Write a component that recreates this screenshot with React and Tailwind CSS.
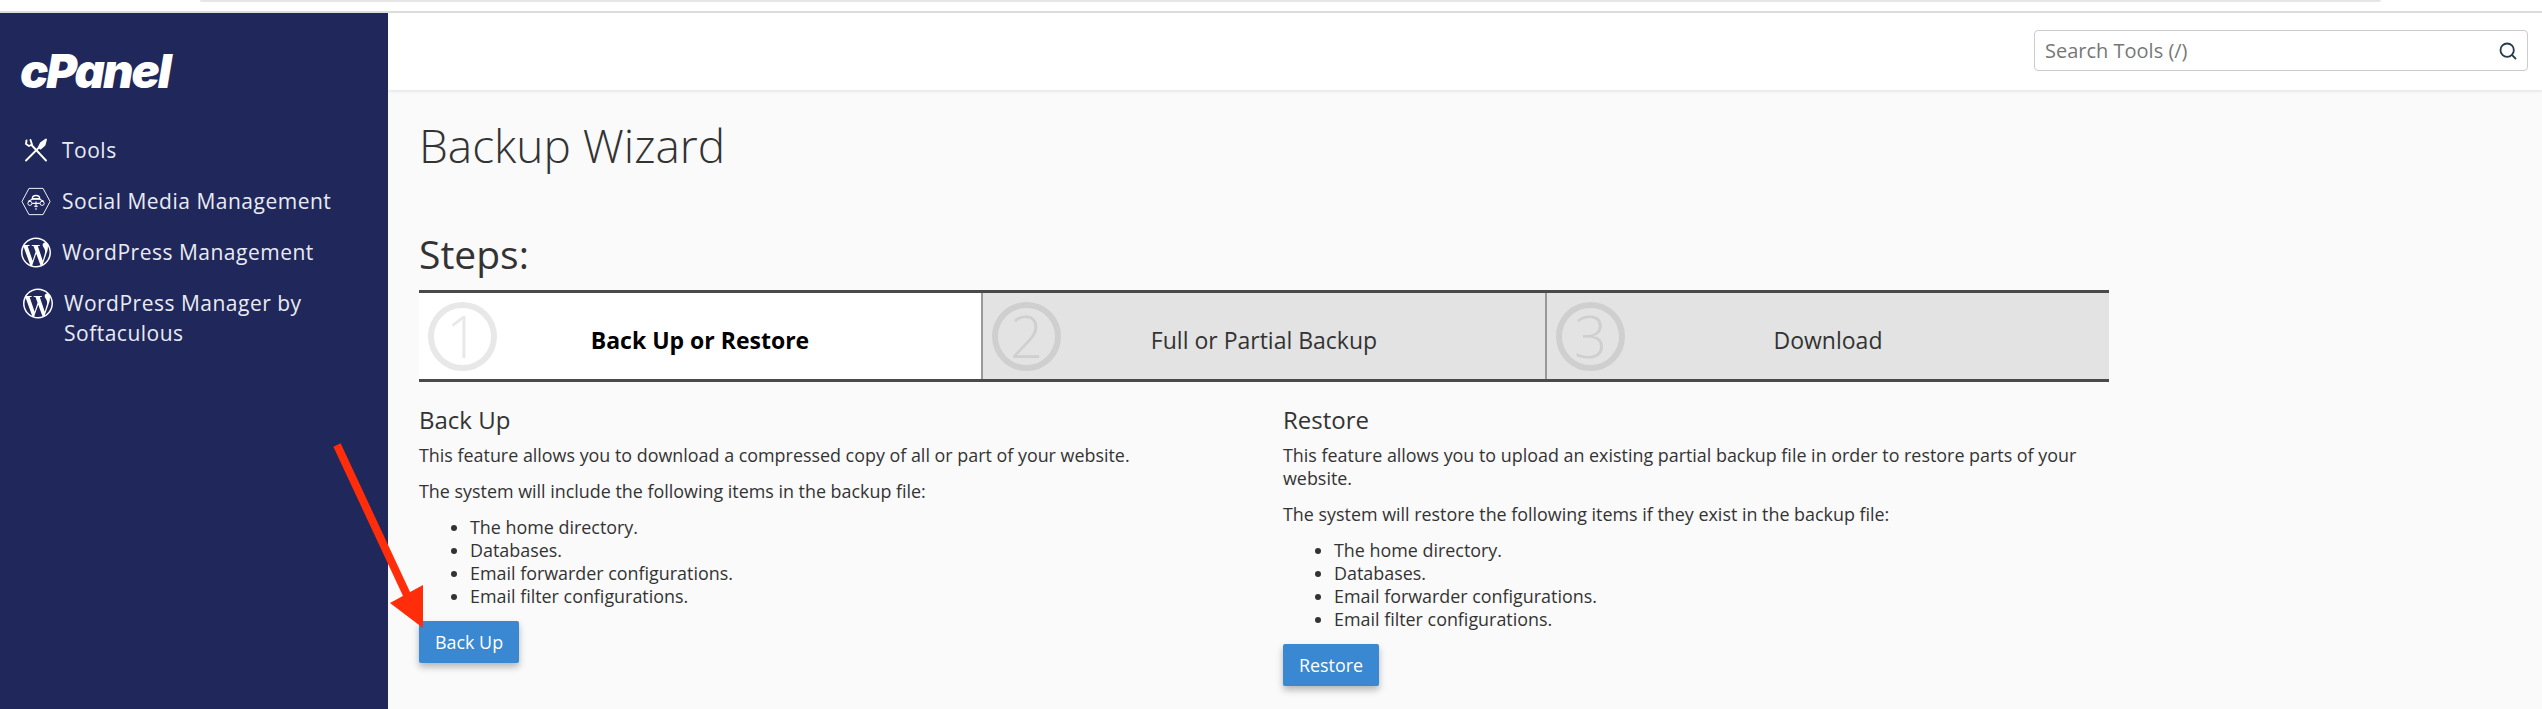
import React from 'react';
import { Search } from 'lucide-react';
import { SiWordpress } from 'react-icons/si';

const font = { fontFamily: '"Open Sans", "Noto Sans", sans-serif' };

function ToolsIcon() {
  return (
    <svg viewBox="0 0 24 24" className="w-[24px] h-[24px] text-white" fill="none" stroke="currentColor" strokeWidth="1.9" strokeLinecap="round" strokeLinejoin="round">
      <path d="M2.5 2.5 L2 6 L5 8 L8 6.5 L6.5 2" />
      <path d="M7.5 7 L22 22.5" />
      <path d="M14.5 10 L2 22.5" />
      <path d="M15 9 L17 5 L22 1.5 L20.5 7 L16.5 10.5 Z" fill="currentColor" />
    </svg>
  );
}

function HexIcon() {
  return (
    <svg viewBox="0 0 32 32" className="w-[31px] h-[31px] text-white" fill="none" stroke="currentColor" strokeWidth="1" strokeLinejoin="round">
      <path d="M1 16 L8.5 2 L23.5 2 L31 16 L23.5 30 L8.5 30 Z" />
      <path d="M12 13 C12 8.5 20 8.5 20 13 Z" strokeWidth="1.4" />
      <path d="M7.5 16 L12 13.5 L20 13.5 L24.5 16" strokeWidth="1.2" />
      <circle cx="9.5" cy="18" r="2.2" />
      <circle cx="22.5" cy="18" r="2.2" />
      <path d="M12 18 L20 18 M16 16 L16 22 M14 21 L18 21 M15 24 L17 24" strokeWidth="1.2" />
    </svg>
  );
}

function NavItem({ icon, children, indent }) {
  return (
    <li className={`flex items-start gap-[11px] ${indent ? 'pl-[23px]' : 'pl-[21px]'}`}>
      <span className="w-[30px] h-[30px] flex items-center justify-center shrink-0">{icon}</span>
      <span className="text-[21px] leading-[30px] tracking-[0.5px] text-[#e9ebf3]">{children}</span>
    </li>
  );
}

function Step({ num, label, active, first }) {
  return (
    <div className={`flex-1 flex items-center h-full ${active ? 'bg-white' : 'bg-[#e3e3e3]'} ${first ? '' : 'border-l-2 border-[#999999]'}`}>
      <div className={`ml-[9px] w-[69px] h-[69px] shrink-0 rounded-full border-[6px] flex items-center justify-center text-[58px] font-light leading-none ${active ? 'border-[#e8e8e8] text-[#e8e8e8]' : 'border-[#cfcfcf] text-[#cfcfcf]'}`}>
        {num}
      </div>
      <div className={`flex-1 pr-[78px] pt-[9px] text-center text-[23px] ${active ? 'font-bold text-black' : 'text-[#333333]'}`}>
        {label}
      </div>
    </div>
  );
}

function Column({ title, intro, includes, button }) {
  return (
    <div>
      <h3 className="text-[24px] leading-[32px] text-[#333333]">{title}</h3>
      <p className="mt-[8px] text-[17.9px] leading-[23px] text-[#333333]">{intro}</p>
      <p className="mt-[13px] text-[17.9px] leading-[23px] text-[#333333]">{includes}</p>
      <ul className="mt-[13px] ml-[51px] list-disc text-[17.9px] leading-[23px] text-[#333333]">
        <li>The home directory.</li>
        <li>Databases.</li>
        <li>Email forwarder configurations.</li>
        <li>Email filter configurations.</li>
      </ul>
      <button className="mt-[13px] h-[42px] px-[16px] rounded-[2px] bg-[#3a87d2] text-[17.9px] text-white shadow-[0_4px_7px_rgba(0,0,0,0.28)]">
        {button}
      </button>
    </div>
  );
}

export default function App() {
  return (
    <div className="relative h-screen flex flex-col overflow-hidden bg-white" style={font}>
      {/* browser leftovers at the very top */}
      <div className="h-[13px] shrink-0 bg-white border-b-2 border-[#dcdcdc]">
        <div className="ml-[200px] w-[2181px] h-[2px] bg-[#e6e6e6] rounded-b-lg" />
      </div>

      <div className="flex flex-1 min-h-0">
        <aside className="w-[388px] shrink-0 bg-[#20275a]">
          <div className="pl-[20px] pt-[33px] text-[47px] leading-[50px] font-black italic tracking-[-2px] text-white" style={{ fontFamily: 'Inter, sans-serif' }}>
            cPanel
          </div>
          <ul className="mt-[39px] flex flex-col gap-[21px]">
            <NavItem icon={<ToolsIcon />}>Tools</NavItem>
            <NavItem icon={<HexIcon />}>Social Media Management</NavItem>
            <NavItem icon={<SiWordpress className="w-[31px] h-[31px] text-white" />}>WordPress Management</NavItem>
            <NavItem indent icon={<SiWordpress className="w-[31px] h-[31px] text-white" />}>
              WordPress Manager by
              <br />
              Softaculous
            </NavItem>
          </ul>
        </aside>

        <div className="flex-1 min-w-0 flex flex-col bg-[#fafafa]">
          <header className="h-[77px] shrink-0 bg-white shadow-[0_2px_2px_rgba(0,0,0,0.07)] flex justify-end items-start pt-[17px] pr-[14px]">
            <div className="w-[494px] h-[41px] flex items-center justify-between pl-[10px] pr-[9px] bg-white border border-[#cccccc] rounded-[4px]">
              <span className="text-[20px] text-[#777777]">Search Tools (/)</span>
              <Search className="w-[20px] h-[20px] text-[#293a4a]" strokeWidth={2.2} />
            </div>
          </header>

          <main className="pl-[31px]">
            <h1 className="mt-[25px] text-[46px] leading-[60px] font-light text-[#333333]">Backup Wizard</h1>
            <h2 className="mt-[55px] text-[39px] leading-[47px] font-medium text-[#333333]">Steps:</h2>

            <div className="mt-[13px] w-[1690px] h-[92px] flex border-t-[3px] border-b-[3px] border-[#4a4a4a]">
              <Step first active num="1" label="Back Up or Restore" />
              <Step num="2" label="Full or Partial Backup" />
              <Step num="3" label="Download" />
            </div>

            <div className="mt-[22px] w-[1690px] grid grid-cols-2 gap-x-[38px]">
              <Column
                title="Back Up"
                intro="This feature allows you to download a compressed copy of all or part of your website."
                includes="The system will include the following items in the backup file:"
                button="Back Up"
              />
              <Column
                title="Restore"
                intro="This feature allows you to upload an existing partial backup file in order to restore parts of your website."
                includes="The system will restore the following items if they exist in the backup file:"
                button="Restore"
              />
            </div>
          </main>
        </div>
      </div>

      {/* red annotation arrow */}
      <svg className="absolute left-[330px] top-[440px] w-[100px] h-[195px]" viewBox="0 0 100 195">
        <path d="M7 5 L77 155" stroke="#ff2d0a" strokeWidth="8" fill="none" />
        <path d="M93 145 L60 163 L93 188 Z" fill="#ff2d0a" />
      </svg>
    </div>
  );
}
